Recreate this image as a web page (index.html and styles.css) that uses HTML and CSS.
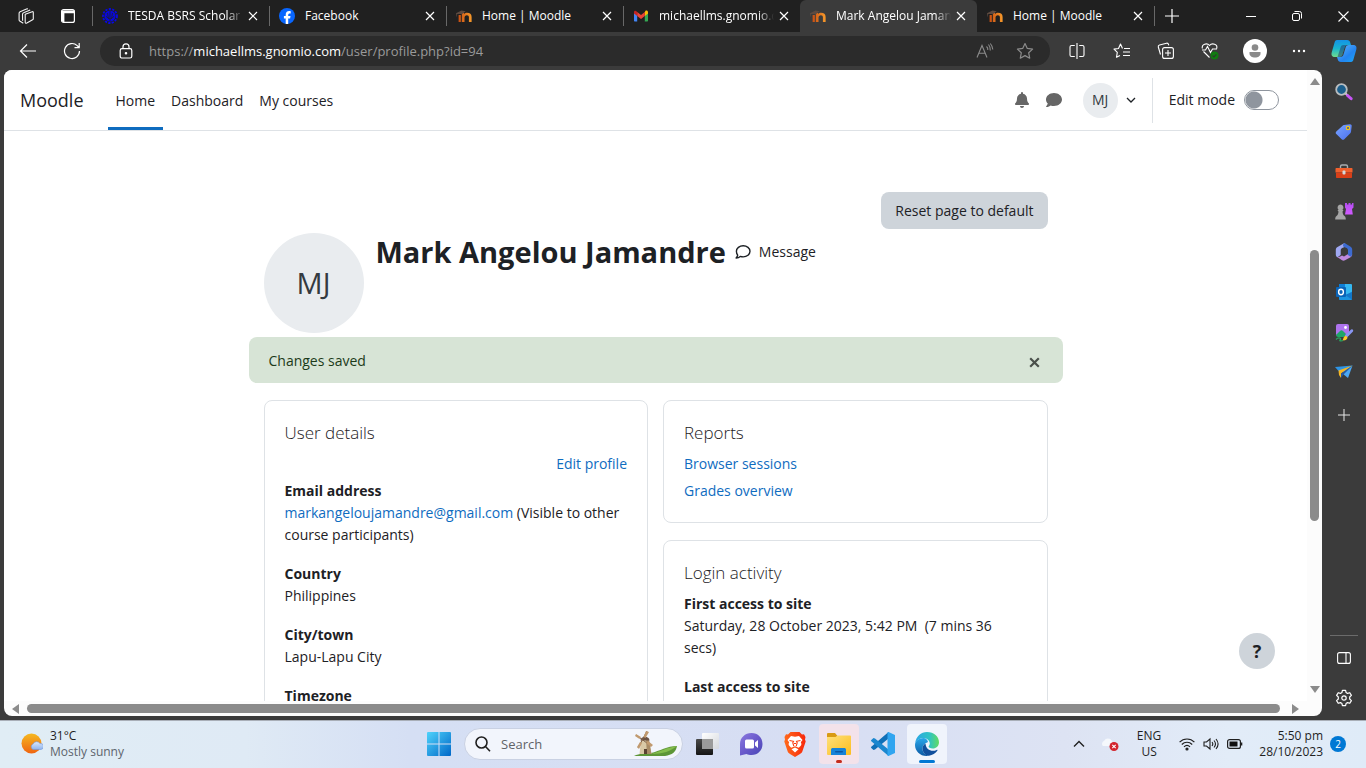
FILE: index.html
```
<!DOCTYPE html>
<html lang="en">
<head>
<meta charset="utf-8">
<meta name="viewport" content="width=device-width, initial-scale=1">
<title>Mark Angelou Jamandre: Public profile</title>
<link rel="stylesheet" href="styles.css">
</head>
<body>
<svg class="defs" aria-hidden="true">
  <defs>
    <linearGradient id="g-win" x1="0" y1="0" x2="1" y2="1"><stop offset="0" stop-color="#4fd3fb"/><stop offset="1" stop-color="#0067c8"/></linearGradient>
    <linearGradient id="g-moodle" x1="0" y1="0" x2="1" y2="0"><stop offset="0" stop-color="#c94f12"/><stop offset="1" stop-color="#f79a2b"/></linearGradient>
    <linearGradient id="g-sun" x1="0" y1="0" x2="0" y2="1"><stop offset="0" stop-color="#f5b921"/><stop offset="1" stop-color="#ef6410"/></linearGradient>
    <linearGradient id="g-cloud" x1="0" y1="0" x2="0" y2="1"><stop offset="0" stop-color="#dce9fb"/><stop offset="1" stop-color="#8fb4ee"/></linearGradient>
    <linearGradient id="g-cop1" x1="0" y1="0" x2="0" y2="1"><stop offset="0" stop-color="#1492e6"/><stop offset=".5" stop-color="#19b5cf"/><stop offset="1" stop-color="#6fdc8c"/></linearGradient>
    <linearGradient id="g-cop2" x1="0" y1="0" x2="1" y2="1"><stop offset="0" stop-color="#64b5f8"/><stop offset=".6" stop-color="#2384f0"/><stop offset="1" stop-color="#19a8f5"/></linearGradient>
    <linearGradient id="g-tag" x1="0" y1="0" x2="1" y2="1"><stop offset="0" stop-color="#7aa5ff"/><stop offset="1" stop-color="#4b6ff0"/></linearGradient>
    <linearGradient id="g-rook" x1="0" y1="0" x2="0" y2="1"><stop offset="0" stop-color="#b44cf2"/><stop offset="1" stop-color="#d25bff"/></linearGradient>
    <linearGradient id="g-chat" x1="0" y1="0" x2="1" y2="1"><stop offset="0" stop-color="#8b7ae0"/><stop offset=".5" stop-color="#6a5acb"/><stop offset="1" stop-color="#4746b5"/></linearGradient>
    <linearGradient id="g-brave" x1="0" y1="0" x2="1" y2="0"><stop offset="0" stop-color="#ff6a1c"/><stop offset="1" stop-color="#f7280c"/></linearGradient>
    <linearGradient id="g-folder" x1="0" y1="0" x2="1" y2="1"><stop offset="0" stop-color="#ffe07a"/><stop offset="1" stop-color="#fbbd1e"/></linearGradient>
    <linearGradient id="g-edge1" x1="0" y1="0" x2="1" y2="0"><stop offset="0" stop-color="#2ba6e6"/><stop offset=".6" stop-color="#2fc3c3"/><stop offset="1" stop-color="#62db61"/></linearGradient>
    <linearGradient id="g-edge2" x1="0" y1="0" x2="0" y2="1"><stop offset="0" stop-color="#2aa7ea"/><stop offset="1" stop-color="#0c59a4"/></linearGradient>
    <linearGradient id="g-win2" x1="0" y1="0" x2="1" y2="1"><stop offset="0" stop-color="#ffffff"/><stop offset="1" stop-color="#d5d8dd"/></linearGradient>
    <symbol id="i-close" viewBox="0 0 12 12"><path d="M2 2l8 8M10 2l-8 8" fill="none" stroke="currentColor" stroke-width="1.2"/></symbol>
    <symbol id="i-plus" viewBox="0 0 14 14"><path d="M7 0v14M0 7h14" fill="none" stroke="currentColor" stroke-width="1.2"/></symbol>
    <symbol id="i-moodle" viewBox="0 0 16 16"><path d="M2.6 14V7h2.2v7zM5.8 14V5h2.3v1.3C8.800 5.200 9.700 4.800 11 4.800c2.900 0 4.600 1.400 4.600 4.200v5h-2.700V9.300c0-1.400-.7-2.100-2-2.100-1.500 0-2.400.9-2.400 2.400V14z" fill="url(#g-moodle)"/><path d="M0 5.300L5.500 2.500l4.200.8-3.500 2.600-2.800.1L1.200 6l-.4 3.500z" fill="#5d4a40"/></symbol>
  </defs>
</svg>

<header class="tabstrip">
  <div class="tab-tools">
    <button class="plain" aria-label="Workspaces"><svg width="18" height="18" viewBox="0 0 18 18" fill="none" stroke="#f2f2f2" stroke-width="1.100" stroke-linejoin="round"><path d="M8.200 7.200l7-2.500c.6-.2 1.100.1 1.100.8v6.300c0 .5-.2.8-.7 1l-5.800 3.300c-.8.4-1.600.1-1.600-.8z"/><path d="M5.600 13.700l-.1-6.300c0-.9.3-1.400 1.100-1.700l6.600-2.800"/><path d="M6.300 16.200L2.700 14c-.4-.3-.6-.6-.6-1.100V6.300c0-.8.300-1.300 1-1.600L9.500 2c.6-.2 1-.1 1.400.1"/></svg></button>
    <button class="plain" aria-label="Tab actions"><svg width="16" height="16" viewBox="0 0 16 16"><rect x="1.600" y="1.600" width="12.800" height="12.800" rx="2" fill="none" stroke="#fff" stroke-width="1.200"/><path d="M1.600 2.500h12.800v2.800H1.600zM1.600 5h2.800v9H3L1.600 13z" fill="#fff"/></svg></button>
  </div>
  <nav class="tabs" aria-label="Tabs">
    <div class="tab"><svg class="favicon" viewBox="0 0 16 16"><circle cx="8" cy="8" r="7" fill="none" stroke="#0808e8" stroke-width="1.800" stroke-dasharray="2.200 1.300"/><circle cx="8" cy="8" r="5.600" fill="#0808d8"/><path d="M8 3v10M5.500 5l1 6M10.500 5l-1 6M4 8.500l4 2.500 4-2.500" stroke="#20202c" stroke-width=".8" fill="none"/></svg><span class="tab-title tab-title-faded">TESDA BSRS Scholar</span><button class="plain" aria-label="Close tab"><svg width="12" height="12"><use href="#i-close"/></svg></button></div>
    <div class="tab"><svg class="favicon" viewBox="0 0 16 16"><circle cx="8" cy="8" r="8" fill="#0866ff"/><path d="M6.700 16v-5.500H4.900V8.100h1.800V7c0-2.700 1.200-4 3.500-4 .5 0 1.200.1 1.500.2v2.200h-.9c-1.200 0-1.600.5-1.600 1.600v1.100h2.300l-.4 2.400H9.200V16z" fill="#fff"/></svg><span class="tab-title">Facebook</span><button class="plain" aria-label="Close tab"><svg width="12" height="12"><use href="#i-close"/></svg></button></div>
    <div class="tab"><svg class="favicon"><use href="#i-moodle"/></svg><span class="tab-title">Home | Moodle</span><button class="plain" aria-label="Close tab"><svg width="12" height="12"><use href="#i-close"/></svg></button></div>
    <div class="tab"><svg class="favicon" viewBox="0 0 16 16"><path d="M1 4v8.500c0 .6.400 1 1 1h2.200V6z" fill="#4285f4"/><path d="M15 4v8.500c0 .6-.4 1-1 1h-2.200V6z" fill="#34a853"/><path d="M11.800 4.200V8L15 5.600V4.200c0-1.500-1.600-2.200-2.700-1.300z" fill="#fbbc04"/><path d="M4.200 8V4L8 6.900 11.800 4v4L8 10.900z" fill="#ea4335"/><path d="M1 4.200v1.400L4.200 8V4.200l-.5-.8C2.600 2.300 1 2.700 1 4.200z" fill="#c5221f"/></svg><span class="tab-title tab-title-faded">michaellms.gnomio.c</span><button class="plain" aria-label="Close tab"><svg width="12" height="12"><use href="#i-close"/></svg></button></div>
    <div class="tab tab-active"><svg class="favicon"><use href="#i-moodle"/></svg><span class="tab-title tab-title-faded">Mark Angelou Jaman</span><button class="plain" aria-label="Close tab"><svg width="12" height="12"><use href="#i-close"/></svg></button></div>
    <div class="tab"><svg class="favicon"><use href="#i-moodle"/></svg><span class="tab-title">Home | Moodle</span><button class="plain" aria-label="Close tab"><svg width="12" height="12"><use href="#i-close"/></svg></button></div>
  </nav>
  <button class="plain new-tab" aria-label="New tab"><svg width="14" height="14"><use href="#i-plus"/></svg></button>
  <div class="window-buttons">
    <button class="plain" aria-label="Minimize"><svg width="10" height="10"><path d="M0 5.500h10" stroke="#fff"/></svg></button>
    <button class="plain" aria-label="Restore"><svg width="10" height="10" fill="none" stroke="#fff"><rect x=".5" y="2.500" width="7" height="7" rx="1.500"/><path d="M2.500 .5h5a2 2 0 0 1 2 2v5"/></svg></button>
    <button class="plain" aria-label="Close"><svg width="11" height="11"><path d="M.5 .5l10 10M10.500 .5l-10 10" stroke="#fff" stroke-width="1.100"/></svg></button>
  </div>
</header>

<div class="toolbar">
  <button class="plain nav-button" aria-label="Back"><svg width="18" height="16" viewBox="0 0 18 16" fill="none" stroke="#fff" stroke-width="1.200"><path d="M17 8H1.500M8 1.500L1.500 8 8 14.500"/></svg></button>
  <button class="plain nav-button" aria-label="Refresh"><svg width="18" height="18" viewBox="0 0 18 18" fill="none" stroke="#fff" stroke-width="1.200"><path d="M16.500 9A7.500 7.500 0 1 1 14.200 3.600L16 5.500M16.200 1v4.700h-4.700"/></svg></button>
  <div class="address">
    <button class="plain" aria-label="View site information"><svg width="14" height="16" viewBox="0 0 14 16" fill="none" stroke="#fff" stroke-width="1.200"><rect x="1.200" y="5.600" width="11.600" height="9.400" rx="1.800"/><path d="M4 5.500V3.800a3 3 0 0 1 6 0v1.700"/><circle cx="7" cy="10.300" r=".7" fill="#fff"/></svg></button>
    <div class="url" role="textbox" aria-label="Address" tabindex="0">https://<span class="url-host">michaellms.gnomio.com</span>/user/profile.php?id=94</div>
    <button class="plain address-action" aria-label="Read aloud"><svg width="18" height="16" viewBox="0 0 18 16" fill="none" stroke="#8b8b8b" stroke-width="1.100"><path d="M1 14.500L6 2.500l5 12M2.800 10.300h6.400M10.500 3.500a4 4 0 0 1 1.300 3.500M12.500 1.500a8 8 0 0 1 1.800 6M14.300 .5a10 10 0 0 1 2.500 6"/></svg></button>
    <button class="plain address-action" aria-label="Add to favorites"><svg width="18" height="18" viewBox="0 0 18 18" fill="none" stroke="#8b8b8b" stroke-width="1.200" stroke-linejoin="round"><path d="M9 1.500l2.300 4.900 5.300.7-3.900 3.700 1 5.400L9 13.600l-4.700 2.600 1-5.400L1.400 7.100l5.300-.7z"/></svg></button>
  </div>
  <div class="toolbar-actions">
    <button class="plain" aria-label="Split screen"><svg width="16" height="16" viewBox="0 0 16 16" fill="none" stroke="#fff" stroke-width="1.100"><path d="M5.800 2.500H2.500A1.500 1.500 0 0 0 1 4v8a1.500 1.500 0 0 0 1.500 1.500h3.300M10.200 2.500h3.300A1.500 1.500 0 0 1 15 4v8a1.500 1.500 0 0 1-1.500 1.500h-3.300M8 0v16"/></svg></button>
    <button class="plain" aria-label="Favorites"><svg width="18" height="16" viewBox="0 0 18 16" fill="none" stroke="#fff" stroke-width="1.100" stroke-linejoin="round"><path d="M9.500 5.500L7.500 1 5.500 5.500l-4.500.6 3.300 3.200-.8 5L7 12.500M11 5.500h6M10 9h7M10 12.500h7"/></svg></button>
    <button class="plain" aria-label="Collections"><svg width="18" height="18" viewBox="0 0 18 18" fill="none" stroke="#fff" stroke-width="1.100"><rect x="5.600" y="5.600" width="10.800" height="10.800" rx="2"/><path d="M11 8v6M8 11h6M3.500 12.500L1.300 5a1.700 1.700 0 0 1 1.200-2L9.500 1.200a1.700 1.700 0 0 1 2 1.200l.3 1"/></svg></button>
    <button class="plain" aria-label="Browser essentials"><svg width="18" height="18" viewBox="0 0 18 18" fill="none" stroke="#fff" stroke-width="1.100"><path d="M1.300 6.500C.5 2 6 .5 8.500 3.500 11 .5 17 2 15.700 6.500M2.500 9.500l6 6M1 8h3.500L6.500 4.500l3 6 2-3.500H16"/><circle cx="13.500" cy="13.500" r="4" fill="#107c10" stroke="none"/><path d="M11.500 13.700l1.400 1.200 2.500-2.500" stroke="#2f382f"/></svg></button>
    <button class="plain" aria-label="Profile"><svg width="24" height="24" viewBox="0 0 24 24"><circle cx="12" cy="12" r="12" fill="#fff"/><circle cx="12" cy="8.500" r="3.300" fill="#8a8a8a"/><path d="M6.500 13h11v1.500c0 2.500-2.500 4-5.500 4s-5.500-1.500-5.500-4z" fill="#8a8a8a"/></svg></button>
    <button class="plain" aria-label="Settings and more"><svg width="14" height="4"><g fill="#fff"><circle cx="2" cy="2" r="1.200"/><circle cx="7" cy="2" r="1.200"/><circle cx="12" cy="2" r="1.200"/></g></svg></button>
    <button class="plain" aria-label="Copilot"><svg width="26" height="24" viewBox="0 0 26 24"><path d="M6 1h10c2 0 2.800 1 3.300 2.700L20 6h-3.500c-1.600 0-2.500.9-3 2.500l-2.200 7.300c-.5 1.500-1.300 2.200-3 2.200H4c-3 0-4-2-3.300-4.500L3.500 3.700C4 2 4.500 1 6 1z" fill="url(#g-cop1)"/><path d="M20 23H10c-2 0-2.800-1-3.300-2.700L6 18h3.500c1.600 0 2.500-.9 3-2.500l2.200-7.300C15.200 6.700 16 6 17.700 6H22c3 0 4 2 3.300 4.500l-2.800 9.800C22 22 21.500 23 20 23z" fill="url(#g-cop2)"/><path d="M12.400 6h4c-1.600 0-2.400.9-2.900 2.500L11.300 16c-.3 1.200-1 2-2 2H6.500l3.200-10c.4-1.300 1.200-2 2.700-2z" fill="#223b6d" opacity=".55"/></svg></button>
  </div>
</div>

<div class="workspace">
  <main class="viewport">
    <div class="page">
      <nav class="navbar">
        <a class="brand" href="#">Moodle</a>
        <div class="nav-links">
          <a class="nav-link nav-link-active" href="#">Home</a>
          <a class="nav-link" href="#">Dashboard</a>
          <a class="nav-link" href="#">My courses</a>
        </div>
        <div class="user-nav">
          <button class="plain nav-icon" aria-label="Notifications"><svg width="14" height="16" viewBox="0 0 448 512"><path fill="#666" d="M224 512c35 0 64-29 64-64H160c0 35 29 64 64 64zm215-150c-19-21-55-52-55-154 0-78-55-140-128-155V32a32 32 0 1 0-64 0v21C119 68 64 130 64 208c0 102-36 133-55 154-6 6-9 14-9 22 0 16 13 32 32 32h384c19 0 32-16 32-32 0-8-3-16-9-22z"/></svg></button>
          <button class="plain nav-icon" aria-label="Messages"><svg width="16" height="16" viewBox="0 0 512 512"><path fill="#666" d="M256 32C115 32 0 125 0 240c0 50 21 95 57 131-13 50-54 95-55 95-2 3-3 6-1 9s4 5 7 5c66 0 116-32 140-51 33 12 69 19 108 19 141 0 256-93 256-208S397 32 256 32z"/></svg></button>
          <button class="plain user-menu" aria-label="User menu"><span class="avatar avatar-small">MJ</span><svg width="10" height="6" fill="none" stroke="#1d2125" stroke-width="1.300"><path d="M1 1l4 4 4-4"/></svg></button>
          <div class="edit-mode"><label for="edit-mode">Edit mode</label><input class="switch" id="edit-mode" type="checkbox" role="switch"></div>
        </div>
      </nav>

      <div class="content">
        <div class="page-actions"><button class="reset-button">Reset page to default</button></div>
        <div class="profile-head">
          <span class="avatar avatar-large">MJ</span>
          <h1 class="profile-name">Mark Angelou Jamandre</h1>
          <a class="message-link" href="#"><svg width="16" height="16" viewBox="0 0 16 16" fill="none" stroke="#1d2125" stroke-width="1.400" stroke-linejoin="round"><path d="M8.200 1.700c3.700 0 6.800 2.500 6.800 5.600s-3.100 5.600-6.800 5.600c-1 0-2-.2-2.900-.5-.9.800-2.300 1.500-4.200 1.600.8-.8 1.400-1.800 1.600-2.900C1.900 10.100 1.400 8.800 1.400 7.300c0-3.100 3.100-5.600 6.800-5.600z"/></svg>Message</a>
        </div>
        <div class="alert" role="alert">Changes saved<button class="plain alert-close" aria-label="Dismiss"><svg width="11" height="11" viewBox="0 0 11 11"><path d="M1.200 1.200l8.600 8.600M9.800 1.200l-8.600 8.600" stroke="#4a504b" stroke-width="2.200"/></svg></button></div>
        <div class="cards">
          <section class="card">
            <h2 class="card-title">User details</h2>
            <a class="edit-link" href="#">Edit profile</a>
            <dl class="details">
              <dt>Email address</dt><dd><a href="#">markangeloujamandre@gmail.com</a> (Visible to other course participants)</dd>
              <dt>Country</dt><dd>Philippines</dd>
              <dt>City/town</dt><dd>Lapu-Lapu City</dd>
              <dt>Timezone</dt>
            </dl>
          </section>
          <div class="card-column">
            <section class="card">
              <h2 class="card-title">Reports</h2>
              <ul class="report-list"><li><a href="#">Browser sessions</a></li><li><a href="#">Grades overview</a></li></ul>
            </section>
            <section class="card card-tall">
              <h2 class="card-title">Login activity</h2>
              <dl class="details">
                <dt>First access to site</dt><dd>Saturday, 28 October 2023, 5:42 PM&nbsp; (7 mins 36 secs)</dd>
                <dt>Last access to site</dt>
              </dl>
            </section>
          </div>
        </div>
      </div>
      <button class="help-button" aria-label="Help">?</button>
    </div>
    <div class="scroll-y"><svg width="10" height="7"><path d="M5 0l5 7H0z" fill="#8b8b8b"/></svg><div class="track-y"><div class="thumb-y"></div></div><svg width="10" height="7"><path d="M5 7L0 0h10z" fill="#8b8b8b"/></svg></div>
    <div class="scroll-x"><svg width="7" height="10"><path d="M0 5l7-5v10z" fill="#8b8b8b"/></svg><div class="thumb-x"></div><svg width="7" height="10"><path d="M7 5L0 0v10z" fill="#8b8b8b"/></svg></div>
  </main>

  <aside class="sidebar" aria-label="Sidebar">
    <button class="plain" aria-label="Search"><svg width="18" height="18" viewBox="0 0 18 18"><path d="M10.500 10.500l3 2.500" stroke="#d8d8d8" stroke-width="2"/><path d="M12.500 12.500l3.600 3.200" stroke="#c754f5" stroke-width="3" stroke-linecap="round"/><circle cx="6.500" cy="6.500" r="5.300" fill="#1c5f8c" stroke="#b9bdc0" stroke-width="1.800"/></svg></button>
    <button class="plain" aria-label="Shopping"><svg width="18" height="18" viewBox="0 0 18 18"><path d="M9 2l5.800-.8c1.200-.1 2 .7 1.900 1.800L16 8.800c0 .6-.3 1-.7 1.400l-6 6c-.8.800-1.800.8-2.600 0L1.300 11c-.8-.8-.8-1.800 0-2.600L7.600 2.700C8 2.300 8.400 2.100 9 2z" fill="url(#g-tag)"/><circle cx="13" cy="5" r="1.700" fill="#4258a8" stroke="#f4c814" stroke-width="1.200"/></svg></button>
    <button class="plain" aria-label="Tools"><svg width="18" height="18" viewBox="0 0 18 18"><path d="M5.500 5V3.500C5.500 2.500 6 2 7 2h4c1 0 1.500.5 1.500 1.500V5" fill="none" stroke="#a9adb0" stroke-width="1.400"/><path d="M1.500 5h15c.6 0 1 .4 1 1v3.500H.5V6c0-.6.4-1 1-1z" fill="#f0602d"/><path d="M1 9.500h16V14c0 .6-.4 1-1 1H2c-.6 0-1-.4-1-1z" fill="#d83f18"/><rect x="7.500" y="7.500" width="3" height="4" rx="1" fill="#d5d8da"/></svg></button>
    <button class="plain" aria-label="Games"><svg width="20" height="18" viewBox="0 0 20 18"><path d="M11 0h2v1.500h1.500V0h2v1.500H18V0h1.500v4.500L18 6l.8 5.500H11L12 6l-1-1.500z" fill="url(#g-rook)"/><path d="M6.500 1.500a3 3 0 0 1 2 5.200l1 .8-1 1c.2 2 .7 3.500 2 4.500.8.500 1.300 1.500 1.300 3.500H1.200c0-2 .5-3 1.300-3.500 1.300-1 1.800-2.500 2-4.500l-1-1 1-.8a3 3 0 0 1 2-5.200z" fill="#a5a5a5"/></svg></button>
    <button class="plain" aria-label="Microsoft 365"><svg width="18" height="18" viewBox="0 0 18 18"><path d="M9.500 0L2.500 4C1.300 4.700.8 5.500.8 7v4.500c0 1.500.8 2.400 1.700 2.800l3.200-2.300V7.500c0-1.300.5-2 1.500-2.600L12 3z" fill="#9fa8f2"/><path d="M1.500 13.500c1.500.8 3 .6 4.200-.2l1.300-.9 2 1 5.500-3.200 2.700 1.300c-.1 1.300-.8 2.100-1.700 2.700L10 17.300c-1 .5-2 .5-3 0z" fill="#bf8adf"/><path d="M9.500 0l5.800 3.500c1.200.8 1.900 1.700 1.900 3.200V11c0 1.300-.6 2.100-1.500 2.700l-3.200-1.900c.3-.3.5-.6.5-1V7.500c0-1.200-.5-2-1.400-2.500L8.500 3.800C7.600 2.500 8 1 9.500 0z" fill="#3d6bd0"/></svg></button>
    <button class="plain" aria-label="Outlook"><svg width="18" height="18" viewBox="0 0 18 18"><rect x="4" y="1" width="13" height="12" rx="1" fill="#35b8f1"/><path d="M4 1h6v6H4z" fill="#0f7fd6"/><path d="M4 9l6.500 4L17 8.500V16c0 .6-.4 1-1 1H5c-.6 0-1-.4-1-1z" fill="#1a93e0"/><path d="M17 9v7.500L10 12z" fill="#1277c9"/><rect x="1" y="4" width="10" height="10" rx="1" fill="#0a64b8"/><ellipse cx="6" cy="9" rx="2.400" ry="2.700" fill="none" stroke="#fff" stroke-width="1.400"/></svg></button>
    <button class="plain" aria-label="Image Creator"><svg width="19" height="19" viewBox="0 0 19 19"><rect x="1" y="1" width="13" height="12" rx="2" fill="#ae73ee"/><circle cx="10.500" cy="4.500" r="1.400" fill="#fff"/><path d="M1 12l4-4c1-1 2-1 3 0l3 3-2 3H3c-1 0-2-1-2-2z" fill="#1fa567"/><path d="M1 16.500c3-3 6-1 4 .5-1 1.200 2 1 3 .5" fill="none" stroke="#27a65f" stroke-width="1.300"/><path d="M17.500 6.500c1 .8.900 1.700 0 2.600l-5.500 5.500-2-2 5.500-5.500c.7-.7 1.300-1 2-.6z" fill="#8895f2"/><path d="M10 13c1.800-.5 3 1 2.200 2.500-.8 1.500-2.700 2.300-4.500 1.800.8-1.800.8-3.800 2.300-4.300z" fill="#ffc928"/></svg></button>
    <button class="plain" aria-label="Drop"><svg width="18" height="14" viewBox="0 0 18 14"><path d="M0 2l17.500-1.500L9 7.500 3.500 6z" fill="#2e94e4"/><path d="M17.500.5L13 13 7.500 8.500z" fill="#4ba8f5"/><path d="M3.500 5.500l14-5L6 8.500V13l-2-3z" fill="#f6b622"/><path d="M6 8.500l11.500-8-9 9L6 13z" fill="#28599f"/></svg></button>
    <button class="plain sidebar-add" aria-label="Customize"><svg width="12" height="12" viewBox="0 0 14 14" color="#e6e6e6"><use href="#i-plus"/></svg></button>
    <div class="sidebar-bottom">
      <button class="plain" aria-label="Hide sidebar"><svg width="14" height="12" fill="none" stroke="#fff" stroke-width="1.100"><rect x=".6" y=".6" width="12.800" height="10.800" rx="2"/><path d="M9 .5v11"/></svg></button>
      <button class="plain" aria-label="Settings"><svg width="18" height="18" viewBox="0 0 18 18" fill="none" stroke="#fff" stroke-width="1.200" stroke-linejoin="round"><path d="M7.400 1.300h3.200l.5 2.300 1.400.8 2.300-.7 1.600 2.700L14.700 8v2l1.700 1.600-1.600 2.700-2.300-.7-1.400.8-.5 2.300H7.400l-.5-2.300-1.400-.8-2.300.7-1.600-2.700L3.300 10V8L1.600 6.400l1.600-2.700 2.300.7 1.400-.8z"/><circle cx="9" cy="9" r="2.200"/></svg></button>
    </div>
  </aside>
</div>

<footer class="taskbar">
  <button class="plain weather"><svg width="22" height="22" viewBox="0 0 22 22"><circle cx="10.500" cy="10.500" r="10" fill="url(#g-sun)"/><path d="M12 16.500a3 3 0 0 1 0-5.500 4 4 0 0 1 7-.5 3 3 0 0 1 1 6z" fill="url(#g-cloud)" stroke="#6f98df" stroke-width=".6"/></svg><span class="weather-text"><span>31°C</span><span class="muted">Mostly sunny</span></span></button>
  <div class="dock">
    <button class="plain dock-item" aria-label="Start"><svg width="24" height="24" viewBox="0 0 24 24"><path d="M1 0h10.500v11.500H0V1a1 1 0 0 1 1-1zM12.500 0H23a1 1 0 0 1 1 1v10.500H12.500zM0 12.500h11.500V24H1a1 1 0 0 1-1-1zM12.500 12.500H24V23a1 1 0 0 1-1 1H12.500z" fill="url(#g-win)"/></svg></button>
    <div class="search">
      <svg width="16" height="16" viewBox="0 0 16 16" fill="none" stroke="#1f1f1f" stroke-width="1.600"><circle cx="6.500" cy="6.500" r="5.500"/><path d="M10.500 10.500l4.500 4.700"/></svg>
      <input class="search-input" type="text" placeholder="Search" aria-label="Search">
      <svg width="44" height="28" viewBox="0 0 44 28"><path d="M0 26c6-3 10-2 17-3 9-2 16-7 26-7-1 6-5 9-12 10z" fill="#5d9637"/><path d="M17 24c10-3 15-6 26-8-6 5-14 8-26 8z" fill="#84bd4c"/><path d="M7 10l8 0 2.500 14H5.500z" fill="#d9c9a6"/><path d="M12 10h3l2.500 14H13z" fill="#a88c66"/><path d="M6.500 10.500c0-5 9-5 9 0z" fill="#6c5344"/><path d="M10 19h3v5h-3z" fill="#5b4331"/><path d="M2 5l15 11M13 1L4 18" stroke="#7d6048" stroke-width="1"/><path d="M2 4l5 3-1.500 2L1 6zM12 1l3 1-3.500 6-2-1zM12 13l2-2 5 4-2 2zM6 12l2 1-3 6-2-2z" fill="#c19a6f"/></svg>
    </div>
    <button class="plain dock-item" aria-label="Task view"><svg width="24" height="24" viewBox="0 0 24 24"><defs><linearGradient id="g-dark" x1="0" y1="0" x2="0" y2="1"><stop offset="0" stop-color="#4a4a4a"/><stop offset="1" stop-color="#151515"/></linearGradient></defs><rect x="1" y="7" width="17" height="16" rx="1" fill="url(#g-dark)"/><rect x="7" y="1" width="17" height="16" rx="1" fill="url(#g-win2)"/><path d="M7 7h11v10H7z" fill="#9b9b9b"/></svg></button>
    <button class="plain dock-item" aria-label="Chat"><svg width="24" height="24" viewBox="0 0 24 24"><path d="M12.500 1C19 1 23.500 5.700 23.500 12S19 23 12.500 23c-2 0-3.500-.4-5-1L1 23.500V12C1 5.700 6 1 12.500 1z" fill="url(#g-chat)"/><rect x="6" y="7.500" width="9" height="9" rx="1.500" fill="#fff"/><path d="M16 10.500L19 8v8l-3-2.500z" fill="#fff"/></svg></button>
    <button class="plain dock-item" aria-label="Brave"><svg width="22" height="26" viewBox="0 0 22 26"><path d="M6.500 1h9L18 3.500l2-.2L21.500 6 21 8.500l.7 2L18.500 20c-.5 1.500-1 2-2.500 3L11 26l-5-3c-1.500-1-2-1.500-2.500-3L.3 10.500l.7-2L.5 6 2 3.300l2 .2z" fill="url(#g-brave)"/><path d="M7 5l4 .7L15 5l3.500 4-1.700 2.300c1 1.700.7 2.700-.3 3.700l-1.700 1.700-3.800-1.500-3.800 1.500L5.500 15c-1-1-1.300-2-.3-3.700L3.500 9zM11 16.500l3.500 1.800L11 21.500l-3.500-3.200z" fill="#fff"/><path d="M5.500 9.500l4 .8-.7 1.500 1 3.400M16.500 9.500l-4 .8.700 1.500-1 3.400M10 12.500h2" fill="none" stroke="#fb3b10" stroke-width="1.100"/></svg></button>
    <button class="plain dock-item dock-attention" aria-label="File Explorer"><svg width="24" height="24" viewBox="0 0 24 24"><path d="M1 1h7l2.500 3H22v8H0V2a1 1 0 0 1 1-1z" fill="#d99a13"/><path d="M8.500 5l2-1.500H23a1 1 0 0 1 1 1V22a1 1 0 0 1-1 1H1a1 1 0 0 1-1-1V5z" fill="url(#g-folder)"/><path d="M4 23v-5c0-1.500.7-2 2-2h11c1.300 0 2 .5 2 2v5z" fill="#1683d8"/><rect x="8" y="19" width="8" height="1.600" rx=".8" fill="#0b56a4"/></svg></button>
    <button class="plain dock-item" aria-label="Visual Studio Code"><svg width="24" height="24" viewBox="0 0 24 24"><path d="M17.500 0v6.500L4 17.500 2.500 18 .3 16c-.4-.4-.4-1 0-1.300z" fill="#1070b8"/><path d="M17.500 24v-6.500L4 6.500 2.500 6 .3 8c-.4.400-.4 1 0 1.300z" fill="#1b87cf"/><path d="M17.500 0L24 3v18l-6.500 3c-.5 0-1-.2-1-1V1c0-.8.500-1 1-1z" fill="#30a5f0"/></svg></button>
    <button class="plain dock-item dock-active" aria-label="Microsoft Edge"><svg width="24" height="24" viewBox="0 0 24 24"><path d="M.2 11C1 4.500 6 0 12 0c7 0 12 4.800 12 10.200 0 3.800-2.800 6.300-6.200 6.300-2.800 0-4.200-1.200-4.200-2 0-.6 1.200-1.300 1.200-3C14.800 8.500 12 6 8.500 6 5 6 1.800 8 .2 11z" fill="url(#g-edge1)"/><path d="M8.500 6C4 6 0 9 0 13c0 6 5 11 11.500 11 1 0 2-.1 2.500-.3-4-.7-6.500-3.800-6.500-7 0-3 1.700-5.300 5.500-6.700C12.500 8 11 6 8.500 6z" fill="url(#g-edge2)"/><path d="M10.500 11.500C8.500 12.500 7.500 14.500 7.500 16.700c0 3.500 3 7 6.500 7 3.500-.5 6.500-2.500 8.300-5 .4-.6 0-1-.6-.8-5 2.300-10.700.1-11.200-6.400z" fill="#104f9c"/></svg></button>
  </div>
  <div class="tray">
    <button class="plain" aria-label="Show hidden icons"><svg width="12" height="8" fill="none" stroke="#1f1f1f" stroke-width="1.400"><path d="M1 6.500l5-5 5 5"/></svg></button>
    <button class="plain" aria-label="OneDrive"><svg width="18" height="14" viewBox="0 0 18 14"><path d="M2 9a3 3 0 0 1 1-5 4.500 4.500 0 0 1 8 0l2 5z" fill="#f5f8fc"/><circle cx="13" cy="9.500" r="4.500" fill="#d3262f"/><path d="M11.300 7.800l3.400 3.400M14.700 7.800l-3.400 3.400" stroke="#fff" stroke-width="1.100"/></svg></button>
    <button class="plain language"><span>ENG</span><span>US</span></button>
    <button class="plain status" aria-label="Network, volume, battery">
      <svg width="16" height="14" viewBox="0 0 16 14" fill="none" stroke="#1f1f1f" stroke-width="1.200"><path d="M.6 5.200c4-4.300 10.800-4.300 14.800 0M2.800 7.500c3-3 7.400-3 10.400 0M5 9.800c1.800-1.800 4.200-1.800 6 0"/><circle cx="8" cy="12" r="1" fill="#1f1f1f"/></svg>
      <svg width="16" height="14" viewBox="0 0 16 14" fill="none" stroke="#1f1f1f" stroke-width="1.100"><path d="M1 5h2.500L7 2v10L3.500 9H1zM9 5c.8 1 .8 3 0 4M11 3.500c1.700 2 1.700 5 0 7M13 2c2.500 3 2.500 7 0 10"/></svg>
      <svg width="16" height="10" viewBox="0 0 16 10"><rect x=".6" y=".6" width="12.800" height="8.800" rx="2" fill="none" stroke="#1f1f1f" stroke-width="1.200"/><path d="M2.500 2.500h8v5h-8z" fill="#111"/><path d="M14 3.500h1.300v3H14z" fill="#1f1f1f"/></svg>
    </button>
    <button class="plain clock"><span>5:50 pm</span><span>28/10/2023</span></button>
    <span class="count">2</span>
  </div>
</footer>
</body>
</html>
```
FILE: styles.css
```
* { box-sizing: border-box; }

body {
  margin: 0;
  height: 100vh;
  display: flex;
  flex-direction: column;
  overflow: hidden;
  background: #3b3b3b;
  color: #1d2125;
  font: 14px/22px "Open Sans", "Noto Sans", sans-serif;
}

h1, h2, dl, dd, ul { margin: 0; padding: 0; }
a { color: #0f6cbf; text-decoration: none; }
svg { flex: none; display: block; }
.defs { position: absolute; width: 0; height: 0; }

.plain {
  display: flex;
  align-items: center;
  justify-content: center;
  padding: 0;
  border: 0;
  background: none;
  color: inherit;
  font: inherit;
}

/* Tab strip */
.tabstrip {
  flex: none;
  display: flex;
  height: 32px;
  background: #202020;
  color: #fff;
  font-size: 12px;
}
.tab-tools { display: flex; gap: 25px; padding: 0 15px 0 17px; border-right: 1px solid transparent; }
.tabs { display: flex; flex: 0 1 1062px; min-width: 0; }
.tab {
  flex: 1;
  min-width: 0;
  display: flex;
  align-items: center;
  padding: 0 10px;
  background: linear-gradient(#686868, #686868) left center / 1px 20px no-repeat;
}
.tab-active { background: #3b3b3b; border-radius: 6px 6px 0 0; }
.tab-active + .tab { background: none; }
.favicon { width: 16px; height: 16px; margin-right: 10px; }
.tab-title {
  flex: 1;
  min-width: 0;
  margin-right: 4px;
  overflow: hidden;
  white-space: nowrap;
}
.tab-title-faded {
  -webkit-mask-image: linear-gradient(90deg, #000 calc(100% - 16px), transparent);
  mask-image: linear-gradient(90deg, #000 calc(100% - 16px), transparent);
}
.new-tab {
  width: 36px;
  background: linear-gradient(#686868, #686868) left center / 1px 20px no-repeat;
}
.window-buttons { display: flex; margin-left: auto; }
.window-buttons .plain { width: 46px; }

/* Toolbar */
.toolbar {
  flex: none;
  display: flex;
  align-items: center;
  height: 38px;
  padding-left: 6px;
  background: #3b3b3b;
}
.nav-button { width: 44px; height: 30px; }
.address {
  flex: 1;
  min-width: 0;
  display: flex;
  align-items: center;
  height: 30px;
  margin: 0 5px 0 6px;
  padding: 0 5px 0 19px;
  border-radius: 15px;
  background: #2b2b2b;
}
.url { flex: 1; min-width: 0; margin-left: 16px; overflow: hidden; white-space: nowrap; color: #9a9a9a; font-size: 13px; }
.url-host { color: #fff; }
.address-action { width: 40px; }
.toolbar-actions { flex: none; display: grid; grid-template-columns: repeat(7, 1fr); width: 311px; }

/* Workspace */
.workspace { flex: 1; min-height: 0; display: flex; }
.viewport {
  flex: 1;
  min-width: 0;
  display: grid;
  grid-template: minmax(0, 1fr) 15px / minmax(0, 1fr) 15px;
  margin: 0 0 4px 4px;
  overflow: hidden;
  border-radius: 8px;
  background: #fcfcfc;
}
.page { position: relative; overflow: hidden; background: #fff; }
.scroll-y { display: flex; flex-direction: column; align-items: center; padding: 8px 0; }
.track-y { flex: 1; width: 9px; padding-top: 165px; }
.thumb-y { height: 271px; border-radius: 5px; background: #8b8b8b; }
.scroll-x { display: flex; align-items: center; gap: 8px; padding: 0 8px; }
.thumb-x { flex: 1; height: 9px; margin-right: 4px; border-radius: 5px; background: #8b8b8b; }

/* Site navigation */
.navbar {
  display: flex;
  height: 61px;
  padding: 0 28px 0 16px;
  border-bottom: 1px solid #dee2e6;
}
.brand { display: flex; align-items: center; margin-right: 24px; color: #1d2125; font-size: 18px; }
.nav-links { display: flex; }
.nav-link { display: flex; align-items: center; padding: 4px 8px 0; border-bottom: 3px solid transparent; color: #1d2125; }
.nav-link-active { border-color: #0f6cbf; }
.user-nav { display: flex; align-items: center; margin-left: auto; }
.nav-icon { width: 32px; }
.user-menu { gap: 8px; margin: 0 16px 0 13px; }
.avatar {
  flex: none;
  display: flex;
  align-items: center;
  justify-content: center;
  border-radius: 50%;
  background: #e9ecef;
  color: #343a40;
}
.avatar-small { width: 35px; height: 35px; }
.avatar-large { width: 100px; height: 100px; font-size: 29px; }
.edit-mode { display: flex; align-items: center; gap: 9px; height: 45px; padding-left: 16px; border-left: 1px solid #dee2e6; }
.switch {
  appearance: none;
  width: 35px;
  height: 20px;
  margin: 0;
  border: 1px solid #8f959e;
  border-radius: 10px;
  background: radial-gradient(circle at 9px 9px, #8f959e 8px, transparent 9px) #fff;
}

/* Profile */
.content { max-width: 814px; margin: 0 auto; padding-top: 61px; }
.page-actions { display: flex; justify-content: flex-end; padding: 0 15px; }
.reset-button {
  height: 37px;
  padding: 0 14px;
  border: 0;
  border-radius: 8px;
  background: #ced4da;
  color: #1d2125;
  font: inherit;
}
.profile-head { display: flex; align-items: flex-start; padding: 4px 15px; }
.profile-name { margin: 0 9px 0 12px; font-size: 29px; line-height: 38px; }
.message-link { display: flex; align-items: center; gap: 8px; height: 38px; color: #1d2125; }
.alert {
  display: flex;
  align-items: center;
  justify-content: space-between;
  height: 46px;
  margin-bottom: 17px;
  padding: 2px 20px 0;
  border-radius: 8px;
  background: #d7e4d6;
  color: #1c3b1a;
}
.alert-close { width: 17px; height: 20px; padding-top: 2px; }
.cards { display: grid; grid-template-columns: 1fr 1fr; gap: 15px; padding: 0 15px; }
.card-column { display: flex; flex-direction: column; gap: 17px; }
.card { padding: 20px; border: 1px solid #dee2e6; border-radius: 8px; background: #fff; }
.card-tall { min-height: 240px; }
.card-title { margin-bottom: 9px; font-size: 17px; font-weight: 300; line-height: 23px; }
.edit-link { display: block; margin-bottom: 5px; text-align: right; }
.details dt { font-weight: 700; }
.details dd { margin-bottom: 17px; }
.report-list { display: flex; flex-direction: column; gap: 5px; list-style: none; }

.help-button {
  position: absolute;
  right: 32px;
  bottom: 32px;
  width: 36px;
  height: 36px;
  padding: 0;
  border: 0;
  border-radius: 50%;
  background: #ced4da;
  color: #1d2125;
  font: 700 18px/34px "Open Sans", sans-serif;
}

/* Sidebar */
.sidebar { flex: none; display: flex; flex-direction: column; width: 44px; padding: 2px 0; }
.sidebar .plain { width: 100%; height: 40px; }
.sidebar .sidebar-add { height: 46px; }
.sidebar-bottom { margin: auto 8px 0; padding-top: 2px; border-top: 1px solid #6b6b6b; }

/* Taskbar */
.taskbar {
  flex: none;
  display: grid;
  grid-template-columns: 1fr auto 1fr;
  height: 48px;
  padding-bottom: 1px;
  border-top: 1px solid #a9afb8;
  background: linear-gradient(90deg, #e0edf5, #dfeaf5 18%, #d5dff4 30%, #d7def3 60%, #dde3f3 78%, #e2ecf8 90%, #dfebf8);
  color: #1f1f1f;
  font-size: 12px;
  line-height: 16px;
}
.weather { justify-content: flex-start; gap: 7px; padding-left: 21px; text-align: left; }
.weather-text, .language, .clock { display: flex; flex-direction: column; }
.muted { color: #5d646c; }
.dock { display: flex; align-items: center; }
.dock-item { width: 40px; height: 40px; margin: 0 2px; border-radius: 4px; }
.dock-attention, .dock-active { position: relative; background: #f0f4fc; }
.dock-attention { background: #f3e2ea; }
.dock-attention::after, .dock-active::after {
  content: "";
  position: absolute;
  bottom: 1px;
  left: 50%;
  width: 16px;
  height: 3px;
  margin-left: -8px;
  border-radius: 2px;
  background: #0078d4;
}
.dock-attention::after { width: 6px; margin-left: -3px; background: #c42b1c; }
.search {
  display: flex;
  align-items: center;
  gap: 10px;
  width: 219px;
  height: 32px;
  margin: 0 2px 0 3px;
  padding: 0 4px 0 10px;
  border: 1px solid #c9d1e3;
  border-radius: 16px;
  background: #f2f5fc;
}
.search-input { flex: 1; min-width: 0; padding: 0; border: 0; background: none; font: 13px/20px "Open Sans", sans-serif; }
.search-input::placeholder { color: #5f6368; opacity: 1; }
.tray { display: flex; align-items: center; justify-content: flex-end; gap: 16px; padding-right: 20px; }
.language { margin: 0 2px; }
.status { gap: 8px; }
.clock { align-items: flex-end; }
.count {
  width: 16px;
  height: 16px;
  margin-left: -9px;
  border-radius: 50%;
  background: #0078d4;
  color: #fff;
  font-size: 10px;
  line-height: 16px;
  text-align: center;
}
```
